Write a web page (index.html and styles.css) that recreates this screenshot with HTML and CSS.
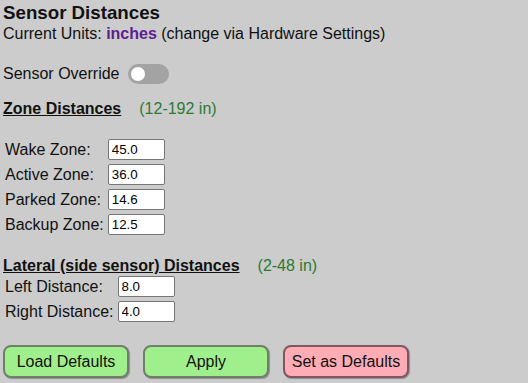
FILE: index.html
```html
<!DOCTYPE html>
<html lang="en">
<head>
    <meta charset="UTF-8">
    <meta name="viewport" content="width=device-width, initial-scale=1.0">
    <title>Sensor Distances</title>
    <link rel="stylesheet" href="styles.css">
</head>
<body>

    <h3 class="title">Sensor Distances</h3>
    <p class="units">Current Units: <span class="unit-name">inches</span> (change via Hardware Settings)</p>

    <div class="override">
        <span>Sensor Override</span>
        <label class="switch">
            <input type="checkbox" id="sensor-override">
            <span class="slider"></span>
        </label>
    </div>

    <div class="section-head">
        <span class="section-title">Zone Distances</span>
        <span class="range">(12-192 in)</span>
    </div>

    <table class="zones">
        <tr><td>Wake Zone:</td><td><input type="text" value="45.0"></td></tr>
        <tr><td>Active Zone:</td><td><input type="text" value="36.0"></td></tr>
        <tr><td>Parked Zone:</td><td><input type="text" value="14.6"></td></tr>
        <tr><td>Backup Zone:</td><td><input type="text" value="12.5"></td></tr>
    </table>

    <div class="section-head lateral-head">
        <span class="section-title">Lateral (side sensor) Distances</span>
        <span class="range">(2-48 in)</span>
    </div>

    <table class="zones lateral">
        <tr><td>Left Distance:</td><td><input type="text" value="8.0"></td></tr>
        <tr><td>Right Distance:</td><td><input type="text" value="4.0"></td></tr>
    </table>

    <div class="buttons">
        <button class="btn green" id="load-defaults">Load Defaults</button>
        <button class="btn green" id="apply">Apply</button>
        <button class="btn pink" id="set-defaults">Set as Defaults</button>
    </div>

</body>
</html>
```

FILE: styles.css
```css
body {
    font-family: "Liberation Sans", Arial, sans-serif;
    font-size: 16px;
    background-color: #cccccc;
    color: #111;
    margin: 0;
    padding: 2px 3px;
}
.title {
    font-size: 18.72px;
    margin: 0;
    line-height: 22px;
}
.units {
    margin: 0;
    line-height: 20px;
}
.unit-name {
    color: #5e1f91;
    font-weight: bold;
}
.override {
    display: flex;
    align-items: center;
    gap: 8px;
    margin-top: 18px;
    height: 24px;
}
.switch {
    position: relative;
    display: inline-block;
    width: 41px;
    height: 20px;
}
.switch input {
    opacity: 0;
    width: 0;
    height: 0;
}
.slider {
    position: absolute;
    inset: 0;
    background-color: #a3a3a3;
    border-radius: 10px;
    cursor: pointer;
}
.slider::before {
    content: "";
    position: absolute;
    left: 3px;
    top: 3px;
    width: 14px;
    height: 14px;
    border-radius: 50%;
    background-color: #fff;
}
.section-head {
    display: flex;
    gap: 18px;
    margin-top: 13px;
    line-height: 20px;
}
.section-title {
    font-weight: bold;
    text-decoration: underline;
}
.range {
    color: #2b7a32;
}
.zones {
    margin-top: 17px;
    border-spacing: 0 2px;
}
.zones td {
    padding: 1px 2px;
}
.zones input {
    width: 49px;
    height: 17px;
    padding: 1px 3px;
    font-family: "Liberation Sans", Arial, sans-serif;
    font-size: 13.33px;
    border: 1px solid #767676;
    border-radius: 2px;
    box-sizing: content-box;
}
.lateral-head {
    margin-top: 18px;
}
.lateral {
    margin-top: -3px;
}
.buttons {
    display: flex;
    gap: 14px;
    margin-top: 20px;
}
.btn {
    width: 126px;
    height: 33px;
    font-family: "Liberation Sans", Arial, sans-serif;
    font-size: 16px;
    color: #111;
    border: 2px solid #6f7f6a;
    border-radius: 8px;
    box-shadow: 1px 1px 1px rgba(0, 0, 0, 0.3);
    cursor: pointer;
}
.green {
    background-color: #9ff08c;
}
.pink {
    background-color: #ffacb6;
    border-color: #7d5862;
}
```
